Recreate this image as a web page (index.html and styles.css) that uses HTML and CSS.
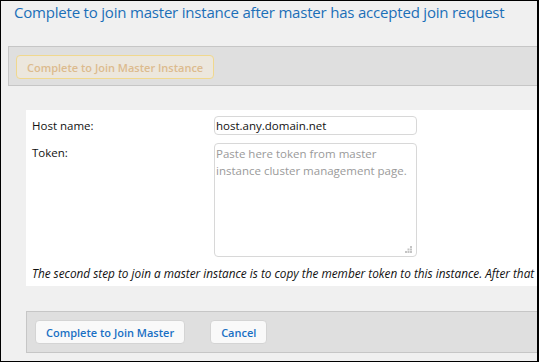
FILE: index.html
```html
<!DOCTYPE html>
<html lang="en">
<head>
<meta charset="UTF-8" />
<title>Complete to join master instance</title>
<link rel="stylesheet" href="styles.css">
</head>
<body>
    <div class="window">
        <h1 class="title">Complete to join master instance after master has accepted join request</h1>

        <div class="toolbar">
            <button class="btn btn-disabled" disabled>Complete to Join Master Instance</button>
        </div>

        <div class="panel">
            <div class="form-grid">
                <label class="field-label" for="hostName">Host name:</label>
                <input class="field-input" id="hostName" type="text" value="host.any.domain.net">

                <label class="field-label" for="token">Token:</label>
                <div class="textarea-wrap">
                    <textarea class="field-textarea" id="token" placeholder="Paste here token from master instance cluster management page."></textarea>
                    <!-- resize grip -->
                    <svg class="grip" width="7" height="7" viewBox="0 0 7 7">
                        <rect x="5" y="0" width="2" height="2" fill="#c4c4c4" />
                        <rect x="2.5" y="2.5" width="2" height="2" fill="#c4c4c4" />
                        <rect x="5" y="2.5" width="2" height="2" fill="#c4c4c4" />
                        <rect x="0" y="5" width="2" height="2" fill="#c4c4c4" />
                        <rect x="2.5" y="5" width="2" height="2" fill="#c4c4c4" />
                        <rect x="5" y="5" width="2" height="2" fill="#c4c4c4" />
                    </svg>
                </div>
            </div>
            <p class="note">The second step to join a master instance is to copy the member token to this instance. After that the master instance will list this instance as a member.</p>
        </div>

        <div class="footer-bar">
            <button class="btn">Complete to Join Master</button>
            <button class="btn">Cancel</button>
        </div>
    </div>
</body>
</html>
```

FILE: styles.css
```css
body {
    margin: 0;
    font-family: "Open Sans", "Noto Sans", sans-serif;
    background-color: #f0f0f0;
}

.window {
    width: 539px;
    height: 362px;
    box-sizing: border-box;
    border: 1px solid #000;
    border-right-width: 2px;
    background-color: #f0f0f0;
    overflow: hidden;
}

.title {
    margin: 0;
    padding: 1px 0 0 13px;
    font-size: 15px;
    font-weight: normal;
    letter-spacing: -0.2px;
    line-height: 20px;
    color: #1b6fb8;
    white-space: nowrap;
}

/* Bars */
.toolbar,
.footer-bar {
    display: flex;
    align-items: center;
    background-color: #dfdfdf;
    border: 1px solid #c6c6c6;
    width: 560px;
}

.toolbar {
    margin: 24px 0 0 7px;
    padding: 8px 0 6px 7px;
}

.footer-bar {
    margin: 25px 0 0 25px;
    padding: 8px 0 8px 8px;
    gap: 25px;
}

/* Buttons */
.btn {
    height: 24px;
    box-sizing: border-box;
    padding: 0 10px;
    font-family: inherit;
    font-size: 11px;
    font-weight: 600;
    color: #1a70c4;
    background-color: #f9f9f9;
    border: 1px solid #d4d4d4;
    border-radius: 4px;
    cursor: pointer;
}

.btn-disabled {
    color: #dcbb8e;
    background-color: #ece7dd;
    border-color: #f0d88e;
    cursor: default;
}

/* Form panel */
.panel {
    margin: 24px 0 0 25px;
    padding: 6px 0 5px 6px;
    width: 560px;
    background-color: #fff;
}

.form-grid {
    display: grid;
    grid-template-columns: 182px 203px;
    row-gap: 8px;
}

.field-label {
    font-size: 11.5px;
    line-height: 19px;
    color: #111;
}

.field-input,
.field-textarea {
    box-sizing: border-box;
    width: 203px;
    margin: 0;
    padding: 0 1px;
    font-family: inherit;
    font-size: 11.5px;
    color: #111;
    border: 1px solid #d8d8d8;
    border-radius: 4px;
    outline: none;
}

.field-input {
    height: 19px;
}

.textarea-wrap {
    position: relative;
    height: 114px;
}

.field-textarea {
    display: block;
    height: 114px;
    padding-top: 1px;
    line-height: 17px;
    resize: none;
}

.field-textarea::placeholder {
    color: #9a9a9a;
}

.grip {
    position: absolute;
    right: 5px;
    bottom: 4px;
}

.note {
    margin: 8px 0 0;
    font-size: 11.8px;
    font-style: italic;
    line-height: 16px;
    color: #111;
    white-space: nowrap;
}
```
